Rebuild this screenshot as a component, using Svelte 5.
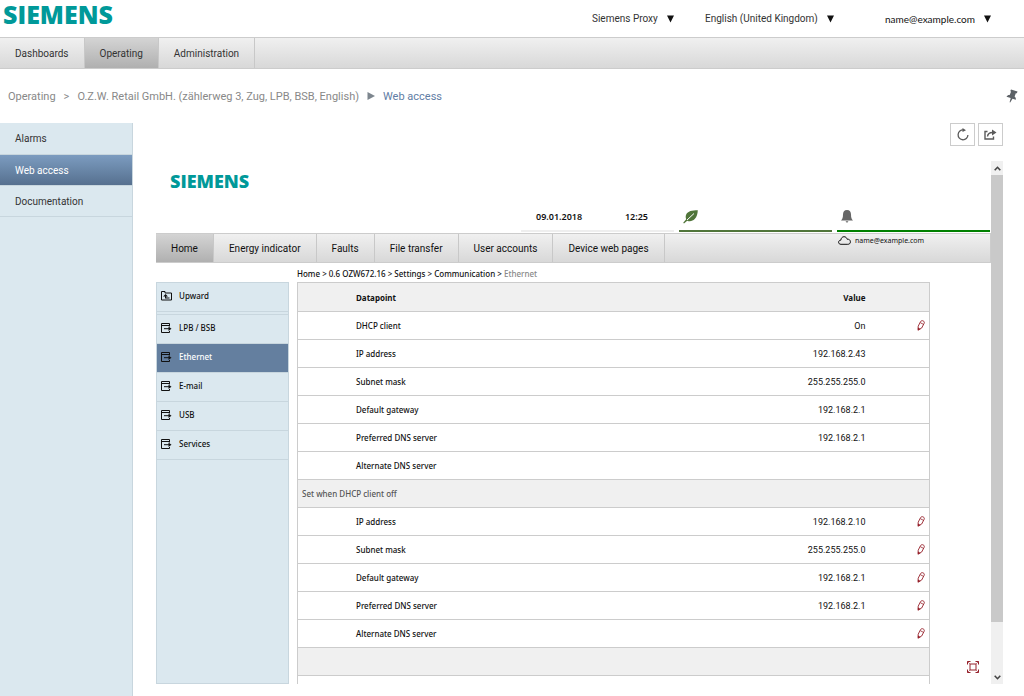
<script lang="ts">
	type Row = {
		label: string;
		value?: string;
		editable?: boolean;
		section?: boolean;
	};

	const mainTabs = ['Dashboards', 'Operating', 'Administration'];
	const sideItems = ['Alarms', 'Web access', 'Documentation'];
	const deviceTabs = ['Home', 'Energy indicator', 'Faults', 'File transfer', 'User accounts', 'Device web pages'];
	const devicePath = ['Home', '0.6 OZW672.16', 'Settings', 'Communication'];
	const deviceItems = ['LPB / BSB', 'Ethernet', 'E-mail', 'USB', 'Services'];

	const rows: Row[] = [
		{ label: 'DHCP client', value: 'On', editable: true },
		{ label: 'IP address', value: '192.168.2.43' },
		{ label: 'Subnet mask', value: '255.255.255.0' },
		{ label: 'Default gateway', value: '192.168.2.1' },
		{ label: 'Preferred DNS server', value: '192.168.2.1' },
		{ label: 'Alternate DNS server' },
		{ label: 'Set when DHCP client off', section: true },
		{ label: 'IP address', value: '192.168.2.10', editable: true },
		{ label: 'Subnet mask', value: '255.255.255.0', editable: true },
		{ label: 'Default gateway', value: '192.168.2.1', editable: true },
		{ label: 'Preferred DNS server', value: '192.168.2.1', editable: true },
		{ label: 'Alternate DNS server', editable: true },
		{ label: '', section: true },
		{ label: '' }
	];

	let mainTab = $state('Operating');
	let sideItem = $state('Web access');
	let deviceTab = $state('Home');
	let deviceItem = $state('Ethernet');
</script>

{#snippet caret()}
	<svg width="7" height="8" viewBox="0 0 7 8" aria-hidden="true"><path d="M0 0.5h7L3.5 7.5z" fill="#111" /></svg>
{/snippet}

<div class="page">
	<header class="top">
		<div class="logo">SIEMENS</div>
		<div class="menus">
			<label class="menu">
				<select aria-label="Customer"><option>Siemens Proxy</option></select>
				{@render caret()}
			</label>
			<label class="menu language">
				<select aria-label="Language"><option>English (United Kingdom)</option></select>
				{@render caret()}
			</label>
			<button class="menu user">name@example.com {@render caret()}</button>
		</div>
	</header>

	<nav class="tabs main-tabs">
		{#each mainTabs as tab}
			<button class:active={tab === mainTab} onclick={() => (mainTab = tab)}>{tab}</button>
		{/each}
	</nav>

	<div class="crumbs">
		<a href="#operating">Operating</a>
		<span class="sep">&gt;</span>
		<a href="#plant">O.Z.W. Retail GmbH. (zählerweg 3, Zug, LPB, BSB, English)</a>
		<svg class="arrow" width="8" height="8" viewBox="0 0 8 8" aria-hidden="true"><path d="M0.5 0L8 4 0.5 8z" fill="#7d868e" /></svg>
		<span class="here">Web access</span>
		<button class="pin" aria-label="Pin">
			<svg width="12" height="14" viewBox="0 0 12 14"><path d="M5 .5l6.500 2-.6 1.800-1.100-.1-1.200 3.300c1.100.9 1.500 2 1.200 3.300L6.500 9.700 4.200 13.500 3.600 13.300 4.700 9.100.5 7.700c.7-1.200 1.700-1.700 3.200-1.600L5 2.800 4.300 2z" fill="#5c6166" /></svg>
		</button>
	</div>

	<div class="body">
		<nav class="side">
			{#each sideItems as item}
				<button class:active={item === sideItem} onclick={() => (sideItem = item)}>{item}</button>
			{/each}
		</nav>

		<main>
			<div class="tools">
				<button aria-label="Refresh">
					<svg width="12" height="13" viewBox="0 0 12 13"><path d="M6.500 2A4.900 4.900 0 1 0 10.900 7" fill="none" stroke="#5a5a5a" stroke-width="1.300" /><path d="M5.500 0L9 2.200 5.500 4z" fill="#5a5a5a" /></svg>
				</button>
				<button aria-label="Open in new window">
					<svg width="13" height="11" viewBox="0 0 13 11"><path d="M3.500 2.500H1v7.500h8.500V7.500M3.500 7.500C3.800 5 5.500 3.500 8.500 3.500" fill="none" stroke="#5a5a5a" stroke-width="1.400" /><path d="M8 .5l4.500 3L8 6.500z" fill="#5a5a5a" /></svg>
				</button>
			</div>

			<div class="frame">
				<div class="device">
					<div class="logo small">SIEMENS</div>

					<div class="status">
						<div class="cell clock"><span>09.01.2018</span><span>12:25</span></div>
						<div class="cell leaf">
							<svg width="15" height="14" viewBox="0 0 15 14" aria-hidden="true"><path d="M14.800.2C9 .2 4.800 1 3.200 4.500c-.8 1.800-.5 3.500 0 4.800L.2 12.700l.8.900 3.200-2.900c2.500 1 5.500.6 7.500-1.600C14 6.500 14.600 3.500 14.800.2z" fill="#50753a" /><path d="M4 10L11 3.500" stroke="#fff" stroke-width="1" /></svg>
						</div>
						<div class="cell bell">
							<svg width="12" height="13" viewBox="0 0 12 13" aria-hidden="true"><path d="M6 0c2.800 0 4 2 4 4.500C10 8 10.700 9 12 10.500H0C1.300 9 2 8 2 4.500 2 2 3.200 0 6 0zM4.700 11.200h2.600a1.300 1.300 0 0 1-2.600 0z" fill="#666" /></svg>
						</div>
					</div>

					<nav class="tabs device-tabs">
						{#each deviceTabs as tab}
							<button class:active={tab === deviceTab} onclick={() => (deviceTab = tab)}>{tab}</button>
						{/each}
						<div class="account">
							<svg width="13" height="9" viewBox="0 0 13 9" aria-hidden="true"><path d="M3 8.300C1.500 8.300.6 7.500.6 6.200S1.600 4.200 2.800 4.200C3.100 2 4.300.7 6 .7s2.700 1 3.100 2.500c2-.2 3.300.9 3.300 2.600S11.300 8.300 9.800 8.300z" fill="none" stroke="#111" /></svg>
							<span>name@example.com</span>
						</div>
					</nav>

					<div class="path">
						{#each devicePath as part}
							<a href="#{part}">{part}</a> &gt;{' '}
						{/each}
						<span>Ethernet</span>
					</div>

					<div class="content">
						<nav class="device-side">
							<button class="upward">
								<svg width="11" height="10" viewBox="0 0 11 10" aria-hidden="true"><path d="M.5.5h3.500v1.500h6.500v7H.5z" fill="none" stroke="#111" /><path d="M4.500 3L7 5.500H5.200V6.500H8.500v1H4V5.500H2.200z" fill="#111" /></svg>
								Upward
							</button>
							{#each deviceItems as item}
								<button class:active={item === deviceItem} onclick={() => (deviceItem = item)}>
									<svg width="11" height="10" viewBox="0 0 11 10" aria-hidden="true"><path d="M8.500 3.500v-3h-8v9h8V8M.5 2.500h8M3 5.700h6" fill="none" stroke="#111" /><path d="M7.500 3.500L10.500 5.700 7.500 8z" fill="#111" /></svg>
									{item}
								</button>
							{/each}
						</nav>

						<table>
							<thead>
								<tr>
									<th class="name">Datapoint</th>
									<th class="value">Value</th>
									<th class="action"></th>
								</tr>
							</thead>
							<tbody>
								{#each rows as row}
									{#if row.section}
										<tr class="section"><td colspan="3">{row.label}</td></tr>
									{:else}
										<tr>
											<td class="name">{row.label}</td>
											<td class="value">{row.value ?? ''}</td>
											<td class="action">
												{#if row.editable}
													<button aria-label="Edit {row.label}">
														<svg width="8" height="11" viewBox="0 0 8 11"><path d="M1.200 6.200L3.500 1.700C4 .7 5.200.4 6.200.9s1.400 1.500.9 2.500L4.700 8 1.200 10z" fill="#fff" stroke="#96202a" stroke-width=".9" /><path d="M3.300 2.700L6.600 4.400" stroke="#96202a" stroke-width=".8" /><path d="M.8 7.500v3.200l2.800-1.700z" fill="#96202a" /></svg>
													</button>
												{/if}
											</td>
										</tr>
									{/if}
								{/each}
							</tbody>
						</table>
					</div>
				</div>

				<div class="scrollbar" aria-hidden="true">
					<svg width="7" height="5" viewBox="0 0 7 5"><path d="M.7 4.200L3.500 1.300 6.300 4.200" fill="none" stroke="#444" stroke-width="1.600" /></svg>
					<div class="thumb"></div>
					<svg width="7" height="5" viewBox="0 0 7 5"><path d="M.7.8L3.500 3.700 6.300.8" fill="none" stroke="#444" stroke-width="1.600" /></svg>
				</div>

				<button class="expand" aria-label="Full screen">
					<svg width="12" height="12" viewBox="0 0 12 12"><path d="M3 3h6v6H3zM.5 3.500v-3h3M8.500.5h3v3M11.500 8.500v3h-3M3.500 11.500h-3v-3" fill="none" stroke="#96202a" /><path d="M.5.5L3 3M11.500.5L9 3M11.500 11.500L9 9M.5 11.500L3 9" stroke="#96202a" stroke-width=".6" /></svg>
				</button>
			</div>
		</main>
	</div>
</div>

<style>
	:global(body) {
		background: #fff;
	}

	.page {
		display: flex;
		flex-direction: column;
		height: 100vh;
		font-family: Roboto, 'Noto Sans', sans-serif;
		font-size: 10px;
		color: #333;
	}

	button,
	select {
		margin: 0;
		padding: 0;
		border: 0;
		background: none;
		font: inherit;
		color: inherit;
		cursor: pointer;
	}

	a {
		color: inherit;
		text-decoration: none;
	}

	svg {
		display: block;
		flex: none;
	}

	/* header */
	.top {
		display: flex;
		justify-content: space-between;
		height: 37px;
		padding: 0 33px 0 3px;
	}

	.logo {
		font-family: 'Open Sans', sans-serif;
		font-weight: 800;
		font-size: 25px;
		line-height: 28px;
		color: #099;
	}

	.menus {
		display: flex;
		align-items: center;
	}

	.menu {
		display: flex;
		align-items: center;
		gap: 9px;
	}

	.menu select {
		appearance: none;
	}

	.language {
		margin-left: 31px;
	}

	.user {
		margin-left: 51px;
		font-family: Lato, sans-serif;
		color: #111;
	}

	/* tab bars */
	.tabs {
		display: flex;
		flex: none;
		box-sizing: border-box;
		border-top: 1px solid #ccc;
		border-bottom: 1px solid #ccc;
		background: linear-gradient(#f0f0f0, #d8d8d8);
	}

	.tabs button {
		padding: 0 15px;
		border-right: 1px solid #c8c8c8;
		white-space: nowrap;
	}

	.tabs button.active {
		background: linear-gradient(#d4d4d4, #b0b0b0);
	}

	.main-tabs {
		height: 32px;
	}

	/* breadcrumb */
	.crumbs {
		display: flex;
		align-items: center;
		flex: none;
		height: 54px;
		padding: 0 6px 0 8px;
		font-size: 11px;
		color: #888;
	}

	.sep {
		margin: 0 8px;
	}

	.arrow {
		margin: 0 8px;
	}

	.here {
		color: #5f7da5;
	}

	.pin {
		margin-left: auto;
	}

	/* body */
	.body {
		display: flex;
		flex: 1;
		min-height: 0;
	}

	.side {
		display: flex;
		flex-direction: column;
		flex: none;
		width: 132px;
		background: #dbe8ef;
		border-right: 1px solid #c8d6de;
	}

	.side button {
		box-sizing: border-box;
		height: 31px;
		padding-left: 15px;
		border-bottom: 1px solid #c8d6de;
		text-align: left;
	}

	.side button:first-child {
		height: 32px;
	}

	.side button.active {
		background: linear-gradient(#7c9cc0, #56708f);
		color: #fff;
	}

	main {
		display: flex;
		flex-direction: column;
		flex: 1;
		min-width: 0;
		padding: 0 21px 12px 23px;
	}

	.tools {
		display: flex;
		justify-content: flex-end;
		gap: 3px;
		margin-bottom: 15px;
	}

	.tools button {
		display: flex;
		align-items: center;
		justify-content: center;
		box-sizing: border-box;
		width: 25px;
		height: 23px;
		border: 1px solid #ccc;
	}

	/* embedded device page */
	.frame {
		position: relative;
		display: flex;
		flex: 1;
		min-height: 0;
	}

	.device {
		display: flex;
		flex-direction: column;
		flex: 1;
		min-width: 0;
		overflow: hidden;
		font-family: 'Noto Sans', 'Open Sans', sans-serif;
		font-size: 8px;
		font-weight: 500;
		color: #111;
	}

	.logo.small {
		padding: 8px 0 0 14px;
		font-size: 18px;
		line-height: 24px;
	}

	.status {
		display: flex;
		justify-content: flex-end;
		gap: 5px;
		margin: 12px 0 1px;
		padding-right: 1px;
	}

	.cell {
		display: flex;
		align-items: center;
		box-sizing: border-box;
		width: 153px;
		height: 27px;
		padding: 0 4px 2px;
		border-bottom: 2px solid #eee;
	}

	.clock {
		justify-content: space-between;
		padding: 0 26px 2px 15px;
		font-size: 9px;
		font-weight: 600;
	}

	.leaf {
		border-color: #50753a;
	}

	.bell {
		border-color: #008000;
	}

	.device-tabs {
		height: 30px;
		border-right: 1px solid #ccc;
		font-family: Roboto, 'Noto Sans', sans-serif;
		font-size: 10px;
		font-weight: 400;
	}

	.account {
		display: flex;
		align-items: center;
		gap: 4px;
		height: 13px;
		width: 152px;
		margin-left: auto;
		font-family: 'Noto Sans', 'Open Sans', sans-serif;
		font-size: 7px;
	}

	.path {
		padding-left: 141px;
		line-height: 12px;
		margin: 5px 0 2px;
	}

	.path span {
		color: #888;
	}

	.content {
		display: flex;
		flex: 1;
		min-height: 0;
		align-items: flex-start;
		gap: 8px;
		padding-right: 61px;
	}

	.device-side {
		display: flex;
		flex-direction: column;
		align-self: stretch;
		box-sizing: border-box;
		flex: none;
		width: 133px;
		border: 1px solid #c8d6de;
		background: #dbe8ef;
	}

	.device-side button {
		display: flex;
		align-items: center;
		box-sizing: border-box;
		height: 29px;
		gap: 7px;
		padding: 0 0 3px 4px;
		border-bottom: 1px solid #c8d6de;
	}

	.device-side .upward {
		height: 32px;
		border-bottom: 4px double #c8d6de;
	}

	.device-side button.active {
		background: #647f9f;
		color: #fff;
	}

	table {
		flex: 1;
		border-collapse: collapse;
		border: 1px solid #ccc;
		table-layout: fixed;
	}

	th,
	td {
		box-sizing: border-box;
		height: 28px;
		padding: 0;
		border-top: 1px solid #ccc;
		text-align: left;
	}

	th {
		height: 29px;
		background: #f0f0f0;
		font-weight: 700;
	}

	.name {
		padding-left: 58px;
	}

	.value {
		text-align: right;
	}

	td.value {
		font-family: Roboto, 'Noto Sans', sans-serif;
		font-size: 9px;
		font-weight: 400;
	}

	.action {
		width: 64px;
	}

	.action button {
		display: block;
		margin: 0 4px 0 auto;
	}

	.section td {
		padding-left: 4px;
		background: #f0f0f0;
		color: #555;
	}

	.scrollbar {
		display: flex;
		flex-direction: column;
		align-items: center;
		box-sizing: border-box;
		flex: none;
		width: 12px;
		padding: 5px 0 4px;
		background: #f0f0f0;
	}

	.thumb {
		width: 12px;
		height: 87%;
		margin: 4px 0 auto;
		background: #c9c9c9;
	}

	.expand {
		position: absolute;
		right: 24px;
		bottom: 11px;
	}
</style>
